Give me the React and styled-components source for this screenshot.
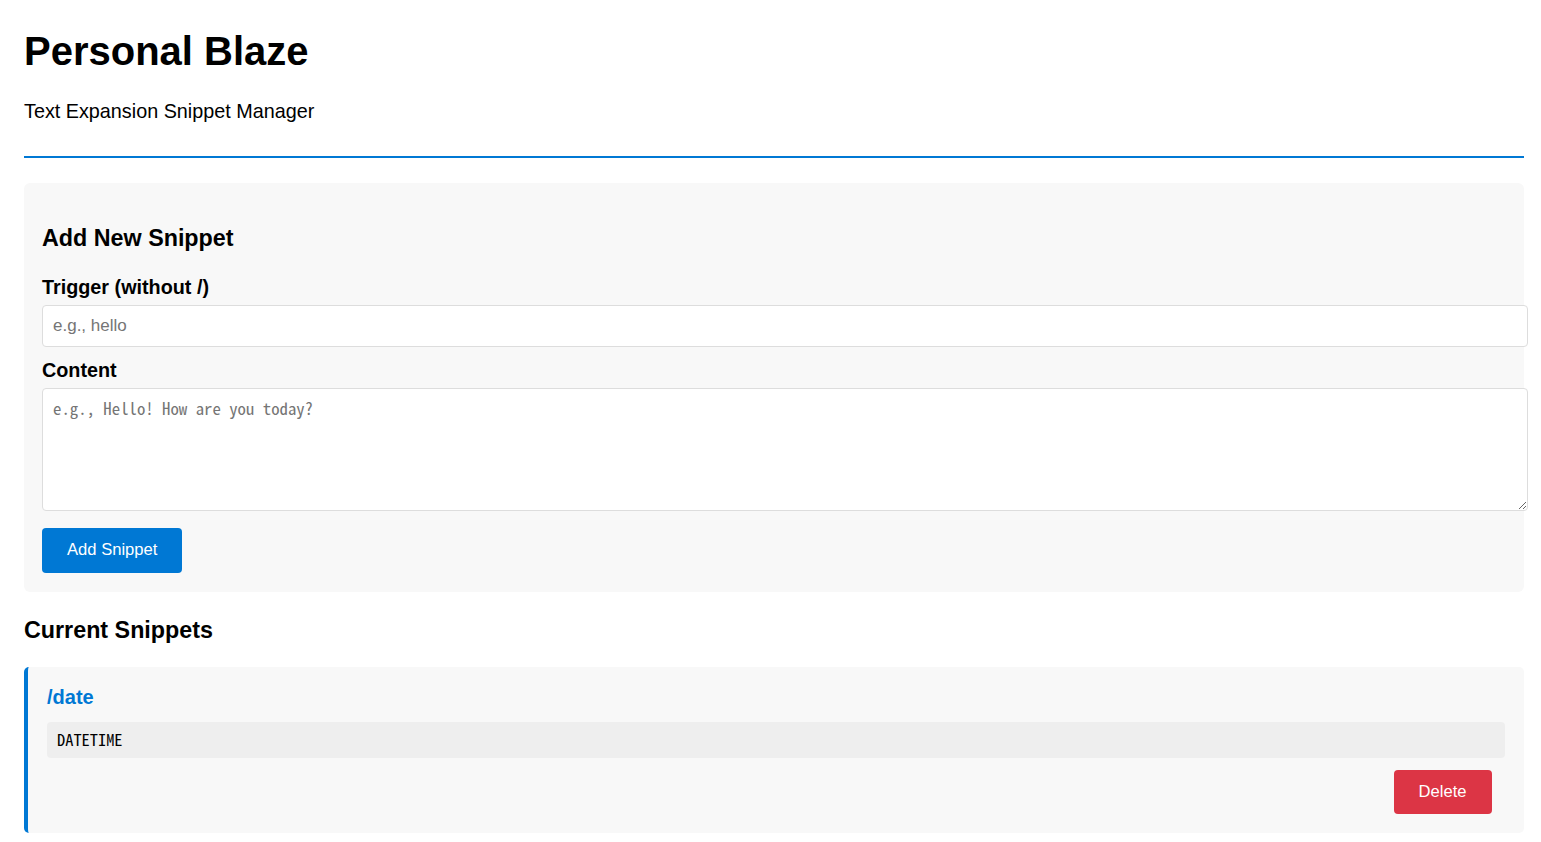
import styled, { createGlobalStyle } from "styled-components";

const GlobalStyle = createGlobalStyle`
  body {
    margin: 0;
    background: #fff;
    color: #000;
    font-family: "Liberation Sans", Arial, sans-serif;
  }
`;

const App = () => {
  const snippets = [{ trigger: "date", content: "DATETIME" }];
  return (
    <Page>
      <GlobalStyle />
      <Header>
        <Title>Personal Blaze</Title>
        <Subtitle>Text Expansion Snippet Manager</Subtitle>
      </Header>

      <FormCard>
        <FormTitle>Add New Snippet</FormTitle>
        <Field>
          <Label htmlFor="trigger">Trigger (without /)</Label>
          <TextInput id="trigger" type="text" placeholder="e.g., hello" />
        </Field>
        <Field $spacing="17px">
          <Label htmlFor="content">Content</Label>
          <TextArea id="content" placeholder="e.g., Hello! How are you today?" />
        </Field>
        <Button>Add Snippet</Button>
      </FormCard>

      <SectionTitle>Current Snippets</SectionTitle>
      <SnippetList>
        {snippets.map((s) => (
          <SnippetItem key={s.trigger}>
            <Trigger>/{s.trigger}</Trigger>
            <SnippetContent>{s.content}</SnippetContent>
            <Actions>
              <Button $variant="danger">Delete</Button>
            </Actions>
          </SnippetItem>
        ))}
      </SnippetList>
    </Page>
  );
};

export default App;

const Page = styled.div`
  max-width: 1500px;
  padding: 0 17px 0 24px;
`;

const Header = styled.header`
  padding-bottom: 33px;
  border-bottom: 2px solid #0078d4;
  margin-bottom: 25px;
`;

const Title = styled.h1`
  margin: 29px 0 0;
  font-size: 40px;
  font-weight: 700;
`;

const Subtitle = styled.p`
  margin: 26px 0 0;
  font-size: 19.8px;
`;

const FormCard = styled.section`
  background: #f8f8f8;
  border-radius: 6px;
  padding: 18px 18px 19px;
`;

const SectionTitle = styled.h2`
  margin: 25px 0 23px;
  font-size: 23.3px;
  font-weight: 700;
`;

const FormTitle = styled(SectionTitle)`
  margin: 24px 0 24px;
`;

const Field = styled.div`
  margin-bottom: ${(p) => p.$spacing || "12px"};
`;

const Label = styled.label`
  display: block;
  margin-bottom: 6px;
  font-size: 19.8px;
  font-weight: 700;
`;

const TextInput = styled.input`
  display: block;
  width: 100%;
  padding: 10px;
  border: 1px solid #ddd;
  border-radius: 4px;
  background: #fff;
  font-family: "Liberation Sans", Arial, sans-serif;
  font-size: 17px;
  outline: none;
`;

const TextArea = styled.textarea`
  display: block;
  width: 100%;
  height: 101px;
  padding: 10px;
  margin: 0;
  border: 1px solid #ddd;
  border-radius: 4px;
  background: #fff;
  font-family: "Noto Sans Mono CJK JP", "Liberation Mono", monospace;
  font-size: 16.8px;
  line-height: 1.15;
  outline: none;
`;

const Button = styled.button`
  display: block;
  padding: 12px 25px;
  border: none;
  border-radius: 4px;
  background: ${(p) => (p.$variant === "danger" ? "#dc3545" : "#0078d4")};
  color: #fff;
  font-family: "Liberation Sans", Arial, sans-serif;
  font-size: 16.6px;
  line-height: 20.5px;
  cursor: pointer;
`;

const SnippetList = styled.div`
  display: flex;
  flex-direction: column;
  gap: 12px;
`;

const SnippetItem = styled.div`
  padding: 19px;
  background: #f8f8f8;
  border-left: 4px solid #0078d4;
  border-radius: 5px;
`;

const Trigger = styled.h3`
  margin: 0 0 13px;
  color: #0078d4;
  font-size: 20px;
  font-weight: 700;
`;

const SnippetContent = styled.pre`
  margin: 0 0 12px;
  padding: 10px;
  background: #eee;
  border-radius: 4px;
  font-family: "Noto Sans Mono CJK JP", "Liberation Mono", monospace;
  font-size: 16.4px;
  line-height: 15px;
  padding-bottom: 11px;
  white-space: pre-wrap;
`;

const Actions = styled.div`
  display: flex;
  justify-content: flex-end;
  padding-right: 13.5px;
`;
